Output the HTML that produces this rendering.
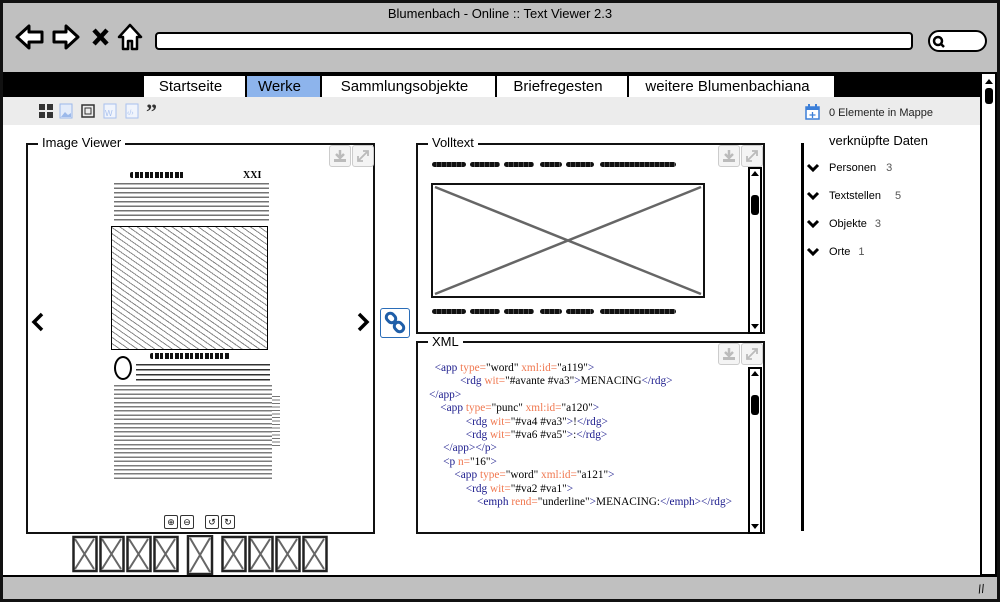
<!DOCTYPE html>
<html><head><meta charset="utf-8"><style>
*{box-sizing:border-box;margin:0;padding:0}
body{width:1000px;height:602px;position:relative;background:#fff;font-family:"Liberation Sans",sans-serif;overflow:hidden}
.a{position:absolute}
.t{font-size:14px;color:#000}
.tab{position:absolute;top:75px;height:22px;background:#fff;border:1.5px solid #000;border-bottom:none;font-size:15px;text-align:center;line-height:22px;padding-right:8px}
.fs{position:absolute;border:2.5px solid #111}
.leg{position:absolute;top:-10px;left:10px;background:#fff;padding:0 4px;font-size:13px;line-height:16px}
.ibtn{position:absolute;width:22px;height:22px;border:1px solid #ccc;border-radius:3px;background:#f4f4f4}
.sb{position:absolute;width:14px;border:2px solid #000;background:#fff}
.xml{font-family:"Liberation Serif",serif;font-size:11.3px;line-height:13.4px;color:#1a1a8c;white-space:pre}
.xml i{font-style:normal;color:#f07850}
.xml b{font-weight:normal;color:#000}
.scr{height:4px;background:repeating-linear-gradient(90deg,#111 0 3px,transparent 3px 5px,#111 5px 9px,transparent 9px 10px);border-radius:2px}
.hand{position:absolute;height:5px;background:repeating-linear-gradient(90deg,#111 0 4px,#555 4px 5px);border-radius:3px}
.zb{position:absolute;top:515px;width:14px;height:14px;border:1px solid #333;border-radius:2px;font-size:9px;line-height:12px;text-align:center;background:#fff}
.li{position:absolute;left:829px;font-size:11px}
.li span{color:#555;margin-left:8px}
.chev{position:absolute;left:806px;width:14px;height:10px}
</style></head><body>
<div class="a" style="left:0;top:0;width:1000px;height:602px;border:3px solid #111;background:#fff"></div>
<div class="a" style="left:3px;top:3px;width:994px;height:69px;background:#c0c0c0"></div>
<div class="a t" style="left:0;width:1000px;top:6px;text-align:center;font-size:13px">Blumenbach - Online :: Text Viewer 2.3</div>
<svg class="a" style="left:14px;top:22px" width="132" height="30" viewBox="0 0 132 30">
<path d="M3 15 L15 4 L15 10 L28 10 L28 20 L15 20 L15 26 Z" fill="#fff" stroke="#000" stroke-width="3" stroke-linejoin="round"/>
<path d="M64 15 L52 4 L52 10 L40 10 L40 20 L52 20 L52 26 Z" fill="#fff" stroke="#000" stroke-width="3" stroke-linejoin="round"/>
<path d="M80 8 L93 22 M93 8 L80 22" stroke="#000" stroke-width="4.5"/>
<path d="M105 15 L116 3 L127 15 L123 15 L123 27 L118 27 L118 19 L114 19 L114 27 L109 27 L109 15 Z" fill="#fff" stroke="#000" stroke-width="2.5" stroke-linejoin="round"/>
</svg>
<div class="a" style="left:155px;top:32px;width:758px;height:18px;background:#fff;border:2.5px solid #000;border-radius:4px"></div>
<div class="a" style="left:928px;top:30px;width:59px;height:22px;background:#fff;border:2.5px solid #000;border-radius:11px"></div>
<svg class="a" style="left:932px;top:35px" width="14" height="13"><circle cx="6" cy="6" r="4" fill="none" stroke="#000" stroke-width="2.5"/><path d="M9 9 L12 12" stroke="#000" stroke-width="2.5"/></svg>
<div class="a" style="left:3px;top:72px;width:977px;height:25px;background:#000"></div>
<div class="tab" style="left:143px;width:103px">Startseite</div>
<div class="tab" style="left:246px;width:75px;background:#8db4ec">Werke</div>
<div class="tab" style="left:321px;width:175px">Sammlungsobjekte</div>
<div class="tab" style="left:496px;width:132px">Briefregesten</div>
<div class="tab" style="left:628px;width:207px">weitere Blumenbachiana</div>
<div class="a" style="left:3px;top:97px;width:977px;height:28px;background:#ececec"></div>
<svg class="a" style="left:38px;top:103px" width="128" height="16">
<rect x="1" y="1" width="6" height="6" fill="#333"/><rect x="9" y="1" width="6" height="6" fill="#333"/><rect x="1" y="9" width="6" height="6" fill="#333"/><rect x="9" y="9" width="6" height="6" fill="#333"/>
<rect x="22" y="1" width="12" height="14" fill="#e4ecfa" stroke="#9cb9ea"/><path d="M23 14 L27 9 L30 12 L33 10 L33 14Z" fill="#9cb9ea"/>
<rect x="44" y="2" width="12" height="12" fill="none" stroke="#333" stroke-width="1.5"/><rect x="47" y="5" width="6" height="6" fill="none" stroke="#333"/>
<rect x="66" y="1" width="12" height="14" fill="#f0f4fc" stroke="#a9c1ee"/><text x="67" y="13" font-size="8" fill="#a9c1ee">W</text>
<rect x="88" y="1" width="12" height="14" fill="#f0f4fc" stroke="#a9c1ee"/><text x="89" y="12" font-size="7" fill="#a9c1ee">‹/›</text>
<text x="108" y="16" font-size="22" font-weight="bold" fill="#333" font-family="Liberation Serif">”</text>
</svg>
<svg class="a" style="left:805px;top:104px" width="16" height="17"><rect x="1" y="3" width="13" height="12" fill="#fff" stroke="#3c7fd8" stroke-width="1.5"/><rect x="1" y="3" width="13" height="3" fill="#3c7fd8"/><rect x="3" y="0" width="2" height="4" fill="#3c7fd8"/><rect x="10" y="0" width="2" height="4" fill="#3c7fd8"/><path d="M7.5 8 V14 M4.5 11 H10.5" stroke="#3c7fd8" stroke-width="1.3"/></svg>
<div class="a" style="left:829px;top:107px;font-size:11px;color:#222">0 Elemente in Mappe</div>
<div class="sb" style="left:980px;top:72px;height:504px;width:17px"></div>
<svg class="a" style="left:983px;top:76px" width="12" height="30"><path d="M2 8 L6 3 L10 8Z" fill="#000"/><rect x="2" y="12" width="8" height="16" rx="3" fill="#000"/></svg>
<div class="a" style="left:3px;top:575px;width:994px;height:24px;background:#c0c0c0;border-top:2.5px solid #000"></div>
<div class="a" style="left:978px;top:582px;font-size:12px;transform:rotate(-10deg)">//</div>
<div class="fs" style="left:26px;top:143px;width:349px;height:391px"><div class="leg">Image Viewer</div></div>
<div class="ibtn" style="left:329px;top:145px"><svg width="20" height="20"><path d="M10 4 V11 M6 8 L10 12 L14 8" stroke="#bbb" stroke-width="2.5" fill="none"/><rect x="4" y="13" width="12" height="3" fill="#bbb"/></svg></div>
<div class="ibtn" style="left:352px;top:145px"><svg width="20" height="20"><path d="M5 15 L15 5 M10 5 H15 V10 M5 10 V15 H10" stroke="#bbb" stroke-width="1.8" fill="none"/></svg></div>
<svg class="a" style="left:31px;top:312px" width="14" height="20"><path d="M11 2 L3 10 L11 18" stroke="#000" stroke-width="3.5" fill="none"/></svg>
<svg class="a" style="left:356px;top:312px" width="14" height="20"><path d="M3 2 L11 10 L3 18" stroke="#000" stroke-width="3.5" fill="none"/></svg>
<div class="a" style="left:130px;top:172px;width:55px;height:7px" ><div class="scr" style="height:6px"></div></div>
<div class="a" style="left:243px;top:170px;font-family:'Liberation Serif',serif;font-size:10px;font-weight:bold">XXI</div>
<div class="a" style="left:114px;top:183px;width:155px;height:38px;background:repeating-linear-gradient(180deg,#444 0 1.5px,#fff 1.5px 4.5px);opacity:.75"></div>
<div class="a" style="left:111px;top:226px;width:157px;height:124px;border:1.5px solid #000;background:repeating-linear-gradient(35deg,#fff 0 4px,#888 4px 5px),repeating-linear-gradient(-50deg,transparent 0 7px,#666 7px 8px)"></div>
<div class="a" style="left:150px;top:353px;width:80px;height:6px"><div class="scr" style="height:6px"></div></div>
<div class="a" style="left:114px;top:356px;width:18px;height:24px;border:2px solid #000;border-radius:50%"></div>
<div class="a" style="left:136px;top:364px;width:134px;height:18px;background:repeating-linear-gradient(180deg,#333 0 1.5px,#fff 1.5px 5px)"></div>
<div class="a" style="left:114px;top:385px;width:158px;height:94px;background:repeating-linear-gradient(180deg,#444 0 1.5px,#fff 1.5px 4.2px);opacity:.7"></div>
<div class="a" style="left:272px;top:396px;width:8px;height:50px;background:repeating-linear-gradient(180deg,#777 0 1px,#fff 1px 3.5px)"></div>
<div class="zb" style="left:164px">⊕</div><div class="zb" style="left:180px">⊖</div>
<div class="zb" style="left:205px">↺</div><div class="zb" style="left:221px">↻</div>
<svg class="a" style="left:72px;top:535px" width="258" height="40">
<g stroke="#666" stroke-width="2" fill="none">
<path d="M3 4 L22 34 M22 4 L3 34"/><path d="M30 4 L49 34 M49 4 L30 34"/><path d="M57 4 L76 34 M76 4 L57 34"/><path d="M84 4 L103 34 M103 4 L84 34"/>
<path d="M118 3 L138 37 M138 3 L118 37"/>
<path d="M152 4 L171 34 M171 4 L152 34"/><path d="M179 4 L198 34 M198 4 L179 34"/><path d="M206 4 L225 34 M225 4 L206 34"/><path d="M233 4 L252 34 M252 4 L233 34"/>
</g>
<g stroke="#222" stroke-width="2.5" fill="none">
<rect x="1.5" y="2" width="23" height="34"/><rect x="28.5" y="2" width="23" height="34"/><rect x="55.5" y="2" width="23" height="34"/><rect x="82.5" y="2" width="23" height="34"/>
<rect x="116" y="1" width="24" height="38"/>
<rect x="150.5" y="2" width="23" height="34"/><rect x="177.5" y="2" width="23" height="34"/><rect x="204.5" y="2" width="23" height="34"/><rect x="231.5" y="2" width="23" height="34"/>
</g></svg>
<div class="a" style="left:380px;top:308px;width:30px;height:30px;border:1.5px solid #2a6db8;border-radius:3px;background:#fff"></div>
<svg class="a" style="left:383px;top:311px" width="24" height="24"><g fill="none" stroke="#1f5ea8" stroke-width="3"><rect x="3" y="3" width="10" height="8" rx="4" transform="rotate(45 8 7)"/><rect x="11" y="12" width="10" height="8" rx="4" transform="rotate(45 16 16)"/></g></svg>
<div class="fs" style="left:416px;top:143px;width:349px;height:191px"><div class="leg">Volltext</div></div>
<div class="ibtn" style="left:718px;top:145px"><svg width="20" height="20"><path d="M10 4 V11 M6 8 L10 12 L14 8" stroke="#bbb" stroke-width="2.5" fill="none"/><rect x="4" y="13" width="12" height="3" fill="#bbb"/></svg></div>
<div class="ibtn" style="left:741px;top:145px"><svg width="20" height="20"><path d="M5 15 L15 5 M10 5 H15 V10 M5 10 V15 H10" stroke="#bbb" stroke-width="1.8" fill="none"/></svg></div>
<div class="hand" style="left:432px;top:162px;width:34px"></div><div class="hand" style="left:470px;top:162px;width:30px"></div><div class="hand" style="left:504px;top:162px;width:30px"></div><div class="hand" style="left:540px;top:162px;width:22px"></div><div class="hand" style="left:566px;top:162px;width:28px"></div><div class="hand" style="left:600px;top:162px;width:76px"></div>
<div class="hand" style="left:432px;top:309px;width:34px"></div><div class="hand" style="left:470px;top:309px;width:30px"></div><div class="hand" style="left:504px;top:309px;width:30px"></div><div class="hand" style="left:540px;top:309px;width:22px"></div><div class="hand" style="left:566px;top:309px;width:28px"></div><div class="hand" style="left:600px;top:309px;width:76px"></div>
<svg class="a" style="left:431px;top:183px" width="274" height="115"><rect x="1" y="1" width="272" height="113" fill="#fff" stroke="#111" stroke-width="2"/><path d="M4 4 L270 111 M270 4 L4 111" stroke="#666" stroke-width="2.5"/></svg>
<div class="sb" style="left:748px;top:167px;height:167px"></div>
<svg class="a" style="left:750px;top:169px" width="10" height="163"><path d="M1 7 L5 2 L9 7Z" fill="#000"/><rect x="1" y="26" width="8" height="20" rx="3" fill="#000"/><path d="M1 155 L5 160 L9 155Z" fill="#000"/></svg>
<div class="fs" style="left:416px;top:341px;width:349px;height:193px"><div class="leg" style="top:-9px">XML</div></div>
<div class="ibtn" style="left:718px;top:343px"><svg width="20" height="20"><path d="M10 4 V11 M6 8 L10 12 L14 8" stroke="#bbb" stroke-width="2.5" fill="none"/><rect x="4" y="13" width="12" height="3" fill="#bbb"/></svg></div>
<div class="ibtn" style="left:741px;top:343px"><svg width="20" height="20"><path d="M5 15 L15 5 M10 5 H15 V10 M5 10 V15 H10" stroke="#bbb" stroke-width="1.8" fill="none"/></svg></div>
<div class="sb" style="left:748px;top:367px;height:167px"></div>
<svg class="a" style="left:750px;top:369px" width="10" height="163"><path d="M1 7 L5 2 L9 7Z" fill="#000"/><rect x="1" y="26" width="8" height="20" rx="3" fill="#000"/><path d="M1 155 L5 160 L9 155Z" fill="#000"/></svg>
<div class="a xml" style="left:429px;top:362px">  &lt;app <i>type=</i><b>"word"</b> <i>xml:id=</i><b>"a119"</b>&gt;
           &lt;rdg <i>wit=</i><b>"#avante #va3"</b>&gt;<b>MENACING</b>&lt;/rdg&gt;
&lt;/app&gt;
    &lt;app <i>type=</i><b>"punc"</b> <i>xml:id=</i><b>"a120"</b>&gt;
             &lt;rdg <i>wit=</i><b>"#va4 #va3"</b>&gt;<b>!</b>&lt;/rdg&gt;
             &lt;rdg <i>wit=</i><b>"#va6 #va5"</b>&gt;<b>:</b>&lt;/rdg&gt;
     &lt;/app&gt;&lt;/p&gt;
     &lt;p <i>n=</i><b>"16"</b>&gt;
         &lt;app <i>type=</i><b>"word"</b> <i>xml:id=</i><b>"a121"</b>&gt;
             &lt;rdg <i>wit=</i><b>"#va2 #va1"</b>&gt;
                 &lt;emph <i>rend=</i><b>"underline"</b>&gt;<b>MENACING:</b>&lt;/emph&gt;&lt;/rdg&gt;</div>
<div class="a" style="left:801px;top:143px;width:2.5px;height:388px;background:#000"></div>
<div class="a" style="left:829px;top:133px;font-size:13px">verknüpfte Daten</div>
<svg class="chev" style="top:163px" viewBox="0 0 14 10"><path d="M2 2 L7 7 L12 2" stroke="#000" stroke-width="3" fill="none"/></svg>
<svg class="chev" style="top:191px" viewBox="0 0 14 10"><path d="M2 2 L7 7 L12 2" stroke="#000" stroke-width="3" fill="none"/></svg>
<svg class="chev" style="top:219px" viewBox="0 0 14 10"><path d="M2 2 L7 7 L12 2" stroke="#000" stroke-width="3" fill="none"/></svg>
<svg class="chev" style="top:247px" viewBox="0 0 14 10"><path d="M2 2 L7 7 L12 2" stroke="#000" stroke-width="3" fill="none"/></svg>
<div class="li" style="top:162px">Personen<span style="margin-left:10px">3</span></div>
<div class="li" style="top:190px">Textstellen<span style="margin-left:14px">5</span></div>
<div class="li" style="top:218px">Objekte<span>3</span></div>
<div class="li" style="top:246px">Orte<span>1</span></div>
</body></html>
